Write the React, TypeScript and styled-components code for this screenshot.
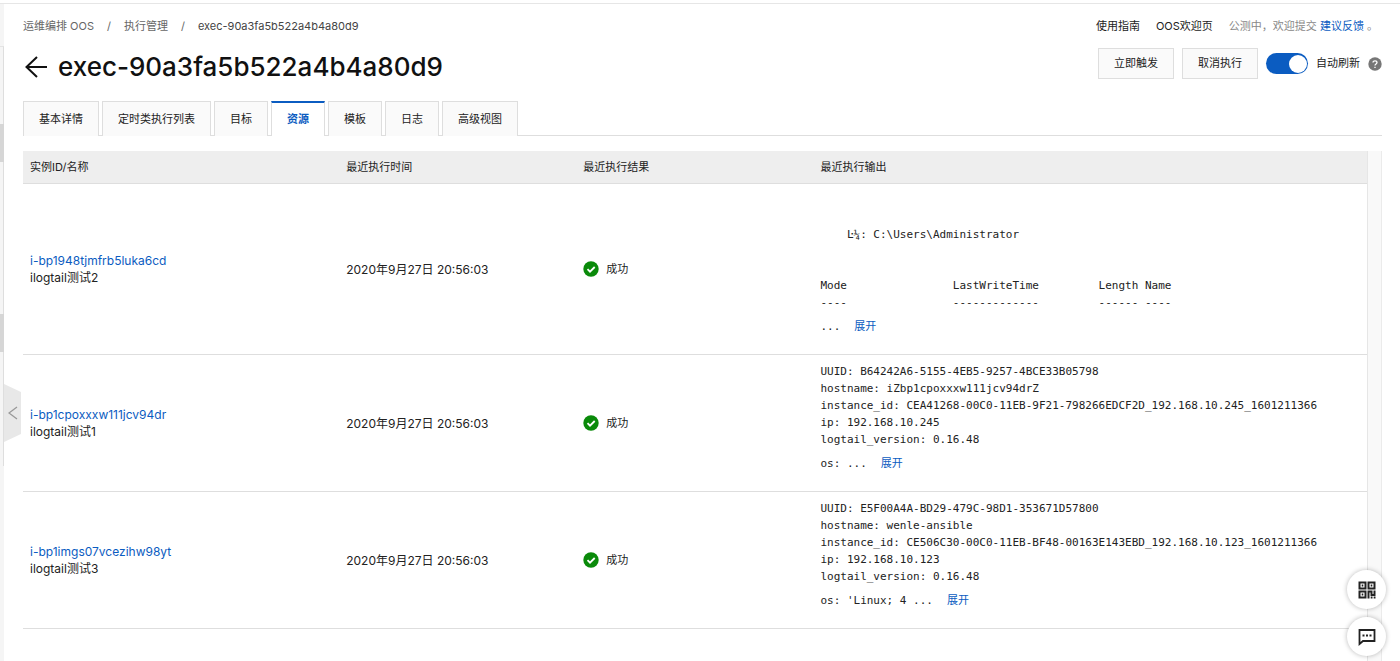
import React, { useState } from "react";
import styled, { createGlobalStyle } from "styled-components";

const GlobalStyle = createGlobalStyle`
  * { box-sizing: border-box; }
  html, body, #root { height: 100%; }
  body {
    margin: 0;
    background: #fff;
    color: #222;
    font-family: Inter, "Noto Sans CJK SC", sans-serif;
    font-size: 11px;
    line-height: 17px;
  }
  button, input { font: inherit; }
  a { color: #0b5cc1; text-decoration: none; }
`;

const Page = styled.div`
  display: flex;
  flex-direction: column;
  min-height: 100%;
`;

const TopEdge = styled.div`
  height: 4px;
  border-bottom: 1px solid #e6e6e6;
`;

const Shell = styled.div`
  display: flex;
  flex: 1;
`;

const Rail = styled.aside`
  position: relative;
  flex: none;
  width: 4px;
  padding-top: 42px;
  background: #f5f5f5;
`;

const RailLine = styled.div`
  height: 420px;
  border-top: 1px solid #e4e4e4;
  border-right: 1px solid #dedede;
`;

const RailMark = styled.span<{ $top: number }>`
  position: absolute;
  left: 0;
  top: ${(p) => p.$top}px;
  width: 4px;
  height: 38px;
  background: #d6d6d6;
`;

const CollapseButton = styled.button`
  position: absolute;
  left: 4px;
  top: 380px;
  width: 17px;
  height: 58px;
  padding: 0;
  border: 0;
  background: #e8e8e8;
  color: #999;
  clip-path: polygon(0 0, 100% 8px, 100% 50px, 0 100%);
  svg { display: block; margin: 0 auto; }
`;

const Main = styled.main`
  flex: 1;
  min-width: 0;
  display: flex;
  flex-direction: column;
  padding: 12px 18px 0 19px;
`;

const Bar = styled.div`
  display: flex;
  justify-content: space-between;
  align-items: center;
`;

const Crumbs = styled.nav`
  display: flex;
  gap: 13px;
  height: 20px;
  align-items: center;
  color: #666;
  a { color: inherit; }
`;

const CurrentCrumb = styled.span`
  color: #444;
`;

const TopLinks = styled.nav`
  display: flex;
  gap: 16px;
  padding-right: 4px;
  color: #888;
`;

const DarkLink = styled.a`
  color: #222;
`;

const TitleBar = styled(Bar)`
  height: 65px;
  align-items: flex-start;
  padding-top: 12px;
`;

const TitleGroup = styled.div`
  display: flex;
  align-items: center;
  gap: 10px;
`;

const BackButton = styled.button`
  padding: 0;
  border: 0;
  background: none;
  color: #111;
  width: 25px;
  height: 38px;
  svg { display: block; }
`;

const Title = styled.h1`
  margin: 0;
  font-size: 26px;
  line-height: 38px;
  font-weight: 500;
  color: #111;
`;

const Actions = styled.div`
  display: flex;
  align-items: center;
  gap: 8px;
`;

const ActionButton = styled.button`
  width: 76px;
  height: 31px;
  padding: 0;
  border: 1px solid #dedede;
  background: #fafafa;
  color: #222;
`;

const SwitchLabel = styled.label`
  display: flex;
  align-items: center;
  gap: 8px;
`;

const Switch = styled.input`
  appearance: none;
  margin: 0;
  width: 42px;
  height: 21px;
  border-radius: 11px;
  background: #bbb;
  display: flex;
  align-items: center;
  padding: 0 1px;
  &::before {
    content: "";
    width: 18px;
    height: 18px;
    border-radius: 50%;
    background: #fff;
  }
  &:checked {
    background: #0b5cc1;
    justify-content: flex-end;
  }
`;

const Tabs = styled.div`
  display: flex;
  gap: 3px;
  height: 35px;
  border-bottom: 1px solid #dedede;
`;

const Tab = styled.button<{ $active?: boolean }>`
  height: 35px;
  padding: ${(p) => (p.$active ? "0 15px 1px" : "0 15px")};
  border: 1px solid #dedede;
  border-bottom: 0;
  border-top: ${(p) => (p.$active ? "2px solid #0b5cc1" : "1px solid #dedede")};
  background: ${(p) => (p.$active ? "#fff" : "#fafafa")};
  color: ${(p) => (p.$active ? "#0b5cc1" : "#222")};
  font-weight: ${(p) => (p.$active ? 600 : 400)};
`;

const Scroller = styled.section`
  flex: 1;
  display: flex;
  margin-top: 15px;
  padding-right: 13px;
  background: linear-gradient(#f9f9f9, #f9f9f9) right / 13px 100% no-repeat;
  border-right: 1px solid #ebebeb;
`;

const TablePane = styled.div`
  flex: 1;
  border-right: 1px solid #e6e6e6;
`;

const Table = styled.table`
  width: 100%;
  border-collapse: separate;
  border-spacing: 0;
  table-layout: fixed;
`;

const Th = styled.th<{ $width?: string }>`
  width: ${(p) => p.$width ?? "auto"};
  height: 33px;
  padding: 0 7px;
  text-align: left;
  font-weight: 400;
  background: #eee;
  border-bottom: 1px solid #dedede;
`;

const Td = styled.td`
  padding: 8px 7px 13px;
  border-bottom: 1px solid #dedede;
  vertical-align: middle;
`;

const InfoTd = styled(Td)`
  padding-bottom: 8px;
  font-size: 12px;
`;

const Status = styled.span`
  display: flex;
  align-items: center;
  gap: 7px;
  font-size: 11px;
`;

const Output = styled.pre`
  margin: 0;
  font-family: "DejaVu Sans Mono", "Noto Sans CJK SC", monospace;
`;

const OutputTail = styled.div`
  display: flex;
  align-items: center;
  height: 30px;
  gap: 14px;
  font-family: "DejaVu Sans Mono", "Noto Sans CJK SC", monospace;
  white-space: pre;
`;

const ExpandButton = styled.button`
  padding: 0;
  border: 0;
  background: none;
  color: #0b5cc1;
`;

const FloatStack = styled.div`
  position: fixed;
  right: 14px;
  bottom: 5px;
  display: flex;
  flex-direction: column;
  gap: 8px;
`;

const FloatButton = styled.button`
  width: 39px;
  height: 39px;
  padding: 0;
  border: 0;
  border-radius: 50%;
  background: #fff;
  color: #222;
  box-shadow: 0 0 5px rgba(0, 0, 0, 0.28);
  svg { display: block; margin: 0 auto; }
`;

const tabs = ["基本详情", "定时类执行列表", "目标", "资源", "模板", "日志", "高级视图"];

const rows = [
  {
    id: "i-bp1948tjmfrb5luka6cd",
    name: "ilogtail测试2",
    output: [
      " ",
      " ",
      "    Ŀ¼: C:\\Users\\Administrator",
      " ",
      " ",
      "Mode                LastWriteTime         Length Name",
      "----                -------------         ------ ----",
    ],
    tail: "...",
  },
  {
    id: "i-bp1cpoxxxw111jcv94dr",
    name: "ilogtail测试1",
    output: [
      "UUID: B64242A6-5155-4EB5-9257-4BCE33B05798",
      "hostname: iZbp1cpoxxxw111jcv94drZ",
      "instance_id: CEA41268-00C0-11EB-9F21-798266EDCF2D_192.168.10.245_1601211366",
      "ip: 192.168.10.245",
      "logtail_version: 0.16.48",
    ],
    tail: "os: ...",
  },
  {
    id: "i-bp1imgs07vcezihw98yt",
    name: "ilogtail测试3",
    output: [
      "UUID: E5F00A4A-BD29-479C-98D1-353671D57800",
      "hostname: wenle-ansible",
      "instance_id: CE506C30-00C0-11EB-BF48-00163E143EBD_192.168.10.123_1601211366",
      "ip: 192.168.10.123",
      "logtail_version: 0.16.48",
    ],
    tail: "os: 'Linux; 4 ...",
  },
];

export default function App() {
  const [active, setActive] = useState("资源");
  const [auto, setAuto] = useState(true);
  return (
    <Page>
      <GlobalStyle />
      <TopEdge />
      <Shell>
        <Rail>
          <RailLine />
          <RailMark $top={120} />
          <RailMark $top={310} />
          <CollapseButton aria-label="收起">
            <svg width="10" height="14" viewBox="0 0 10 14" fill="none" stroke="currentColor" strokeWidth="1.3">
              <path d="M9 1 1 7l8 6" />
            </svg>
          </CollapseButton>
        </Rail>
        <Main>
          <Bar>
            <Crumbs>
              <a href="#oos">运维编排 OOS</a>
              <span>/</span>
              <a href="#executions">执行管理</a>
              <span>/</span>
              <CurrentCrumb>exec-90a3fa5b522a4b4a80d9</CurrentCrumb>
            </Crumbs>
            <TopLinks>
              <DarkLink href="#guide">使用指南</DarkLink>
              <DarkLink href="#welcome">OOS欢迎页</DarkLink>
              <span>
                公测中，欢迎提交 <a href="#feedback">建议反馈</a> 。
              </span>
            </TopLinks>
          </Bar>
          <TitleBar>
            <TitleGroup>
              <BackButton aria-label="返回">
                <svg width="25" height="22" viewBox="0 0 25 22" fill="none" stroke="currentColor" strokeWidth="2">
                  <path d="M14 1 3.5 11 14 21M3.5 11H24" />
                </svg>
              </BackButton>
              <Title>exec-90a3fa5b522a4b4a80d9</Title>
            </TitleGroup>
            <Actions>
              <ActionButton>立即触发</ActionButton>
              <ActionButton>取消执行</ActionButton>
              <SwitchLabel>
                <Switch type="checkbox" checked={auto} onChange={(e) => setAuto(e.target.checked)} />
                自动刷新
              </SwitchLabel>
              <svg width="14" height="14" viewBox="0 0 14 14">
                <circle cx="7" cy="7" r="6.7" fill="#777" />
                <path d="M5 5.6C5 3.200 9 3.200 9 5.6 9 7 7 6.9 7 8.5M7 9.7v1.300" fill="none" stroke="#fff" strokeWidth="1.3" />
              </svg>
            </Actions>
          </TitleBar>
          <Tabs role="tablist">
            {tabs.map((t) => (
              <Tab key={t} role="tab" aria-selected={t === active} $active={t === active} onClick={() => setActive(t)}>
                {t}
              </Tab>
            ))}
          </Tabs>
          <Scroller>
            <TablePane>
              <Table>
                <thead>
                  <tr>
                    <Th $width="23.53%">实例ID/名称</Th>
                    <Th $width="17.64%">最近执行时间</Th>
                    <Th $width="17.64%">最近执行结果</Th>
                    <Th>最近执行输出</Th>
                  </tr>
                </thead>
                <tbody>
                  {rows.map((r) => (
                    <tr key={r.id}>
                      <InfoTd>
                        <a href={`#${r.id}`}>{r.id}</a>
                        <div>{r.name}</div>
                      </InfoTd>
                      <InfoTd>2020年9月27日 20:56:03</InfoTd>
                      <InfoTd>
                        <Status>
                          <svg width="16" height="16" viewBox="0 0 16 16">
                            <circle cx="8" cy="8" r="7.7" fill="#0a8a0a" />
                            <path d="m4.500 8.200 2.500 2.500 4.700-4.700" fill="none" stroke="#fff" strokeWidth="1.8" />
                          </svg>
                          成功
                        </Status>
                      </InfoTd>
                      <Td>
                        <Output>{r.output.join("\n")}</Output>
                        <OutputTail>
                          {r.tail}
                          <ExpandButton>展开</ExpandButton>
                        </OutputTail>
                      </Td>
                    </tr>
                  ))}
                </tbody>
              </Table>
            </TablePane>
          </Scroller>
        </Main>
      </Shell>
      <FloatStack>
        <FloatButton aria-label="二维码">
          <svg width="18" height="18" viewBox="0 0 18 18" fill="none" stroke="currentColor" strokeWidth="2">
            <path d="M1.500 1.500h6v6h-6zM10.500 1.500h6v6h-6zM1.500 10.500h6v6h-6zM10.500 17.500v-7h3v3.500h3V9.500" />
            <path d="M3.700 4.500h1.600M12.700 4.500h1.600M3.700 13.500h1.600M12.700 16.500h1.800M15.700 16.500h1.800" />
          </svg>
        </FloatButton>
        <FloatButton aria-label="在线咨询">
          <svg width="18" height="18" viewBox="0 0 18 18" fill="none" stroke="currentColor" strokeWidth="1.8">
            <path d="M1.500 16V2h15v11H5z" />
            <path d="M4.500 7.500h2M8 7.500h2M11.500 7.500h2" strokeWidth="2" />
          </svg>
        </FloatButton>
      </FloatStack>
    </Page>
  );
}
